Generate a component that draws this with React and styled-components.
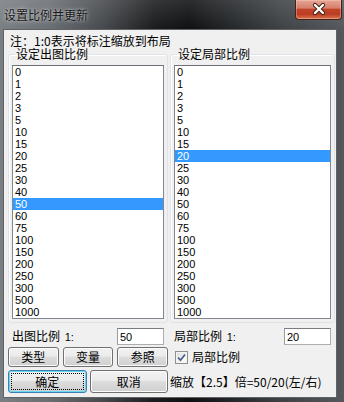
import styled, { createGlobalStyle } from "styled-components";

const GlobalStyle = createGlobalStyle`
  html, body {
    margin: 0;
    padding: 0;
    background: #1c1d1f;
  }
`;

const ratios = [0, 1, 2, 3, 5, 10, 15, 20, 25, 30, 40, 50, 60, 75, 100, 150, 200, 250, 300, 500, 1000];

const App = () => {
  return (
    <>
      <GlobalStyle />
      <Window>
        <TitleBar>
          <TitleText>设置比例并更新</TitleText>
          <CloseButton>
            <svg width="45" height="19" viewBox="0 0 45 19">
              <path d="M19 5 L27 13 M27 5 L19 13" stroke="#3a1b14" strokeWidth="4.2" strokeLinecap="round" />
              <path d="M19 5 L27 13 M27 5 L19 13" stroke="#ffffff" strokeWidth="2.4" strokeLinecap="round" />
            </svg>
          </CloseButton>
        </TitleBar>
        <Client>
          <Note>注：1:0表示将标注缩放到布局</Note>
          <Columns>
            <Column>
              <GroupBox>
                <GroupLegend>设定出图比例</GroupLegend>
                <ListBox>
                  {ratios.map((r) => (
                    <ListItem key={r} $selected={r === 50}>{r}</ListItem>
                  ))}
                </ListBox>
              </GroupBox>
              <FieldRow>
                <FieldLabel>出图比例 <Num>1:</Num></FieldLabel>
                <TextBox defaultValue="50" />
              </FieldRow>
              <ButtonGrid $cols={3} $height={20}>
                <Button>类型</Button>
                <Button>变量</Button>
                <Button>参照</Button>
              </ButtonGrid>
              <ButtonGrid $cols={2} $height={23}>
                <Button $focused>确定</Button>
                <Button>取消</Button>
              </ButtonGrid>
            </Column>
            <Column>
              <GroupBox>
                <GroupLegend>设定局部比例</GroupLegend>
                <ListBox>
                  {ratios.map((r) => (
                    <ListItem key={r} $selected={r === 20}>{r}</ListItem>
                  ))}
                </ListBox>
              </GroupBox>
              <FieldRow>
                <FieldLabel>局部比例 <Num>1:</Num></FieldLabel>
                <TextBox defaultValue="20" />
              </FieldRow>
              <CheckRow>
                <CheckBox>
                  <svg width="11" height="11" viewBox="0 0 11 11">
                    <path d="M2 5.5 L4.5 8.2 L9 2.5" stroke="#4a5f8f" strokeWidth="1.8" fill="none" />
                  </svg>
                </CheckBox>
                <span>局部比例</span>
              </CheckRow>
              <Status>缩放【2.5】倍=50/20(左/右)</Status>
            </Column>
          </Columns>
        </Client>
      </Window>
    </>
  );
};

const Window = styled.div`
  width: 344px;
  height: 402px;
  display: flex;
  flex-direction: column;
  box-sizing: border-box;
  padding: 0 7px 4px 3px;
  background:
    linear-gradient(180deg, rgba(255,255,255,0.12) 0%, rgba(255,255,255,0) 30px),
    linear-gradient(90deg, #7a7f84 0%, #6a6f74 14%, #45484c 30%, #1a1b1d 45%, #0f1011 55%, #25282b 68%, #3e4245 82%, #54585c 100%);
  font-family: "Noto Sans CJK SC", "Liberation Sans", sans-serif;
  font-size: 12px;
  color: #000;
`;

const TitleBar = styled.div`
  height: 29px;
  display: flex;
  align-items: flex-start;
  margin-right: -7px;
  margin-left: -3px;
  flex-shrink: 0;
`;

const TitleText = styled.div`
  padding: 8px 0 0 4px;
  font-size: 12px;
  line-height: 14px;
  color: #161616;
  text-shadow: 0 0 5px rgba(255, 255, 255, 0.55), 0 0 2px rgba(255, 255, 255, 0.5);
`;

const CloseButton = styled.div`
  margin-left: auto;
  margin-right: 2px;
  width: 47px;
  height: 20px;
  box-sizing: border-box;
  display: flex;
  align-items: center;
  justify-content: center;
  border: 1px solid #4a211a;
  border-top: none;
  border-radius: 0 0 4px 4px;
  background: linear-gradient(180deg, #e6a595 0%, #d6806c 42%, #c1432a 50%, #bb3d24 75%, #d9764f 100%);
  box-shadow: inset 0 0 0 1px rgba(255, 220, 200, 0.35);
`;

const Client = styled.div`
  flex: 1;
  box-sizing: border-box;
  background: #f0f0f0;
  border: 1px solid #5f6366;
  display: flex;
  flex-direction: column;
`;

const Note = styled.div`
  padding: 5px 0 0 6px;
  height: 13px;
  line-height: 12px;
  white-space: nowrap;
`;

const Columns = styled.div`
  display: flex;
  gap: 2px;
  padding: 0 1px 0 4px;
`;

const Column = styled.div`
  display: flex;
  flex-direction: column;
  flex: 1;
  &:first-child {
    flex: 0 0 160px;
  }
`;

const GroupBox = styled.fieldset`
  margin: 0;
  padding: 0 3px 3px 3px;
  min-width: 0;
  border: 1px solid #dde3e8;
  border-radius: 3px;
  box-shadow: inset 1px 1px 0 #ffffff;
`;

const GroupLegend = styled.legend`
  margin-left: 3px;
  padding: 0 1px;
  font-size: 12px;
  line-height: 12px;
  height: 12px;
`;

const ListBox = styled.div`
  margin-top: 5px;
  height: 254px;
  box-sizing: border-box;
  background: #fff;
  border: 1px solid #828790;
  border-top-color: #6d7077;
  overflow: hidden;
`;

const ListItem = styled.div`
  height: 12px;
  line-height: 12px;
  padding-left: 2px;
  font-family: "Liberation Sans", Arial, sans-serif;
  font-size: 11px;
  color: ${(p) => (p.$selected ? "#fff" : "#000")};
  background: ${(p) => (p.$selected ? "#3399ff" : "transparent")};
`;

const FieldRow = styled.div`
  margin-top: 5px;
  height: 17px;
  display: flex;
  align-items: center;
  justify-content: space-between;
  padding: 0 4px 0 4px;
`;

const FieldLabel = styled.span`
  line-height: 12px;
  white-space: nowrap;
`;

const Num = styled.span`
  margin-left: 2px;
  font-family: "Liberation Sans", Arial, sans-serif;
  font-size: 11px;
`;

const TextBox = styled.input`
  width: 47px;
  height: 17px;
  box-sizing: border-box;
  margin: 0;
  padding: 0 2px;
  border: 1px solid #abadb3;
  border-top-color: #7a7c80;
  border-left-color: #9a9ca2;
  background: #fff;
  font-family: "Liberation Sans", Arial, sans-serif;
  font-size: 11px;
  color: #000;
  outline: none;
`;

const ButtonGrid = styled.div`
  display: grid;
  grid-template-columns: repeat(${(p) => p.$cols}, 1fr);
  gap: ${(p) => (p.$cols === 3 ? 4 : 3)}px;
  height: ${(p) => p.$height}px;
  margin-top: ${(p) => (p.$cols === 3 ? 2 : 3)}px;
`;

const Button = styled.button`
  margin: 0;
  padding: 0;
  height: 100%;
  box-sizing: border-box;
  font-family: "Noto Sans CJK SC", "Liberation Sans", sans-serif;
  font-size: 12px;
  line-height: 12px;
  color: #000;
  border: 1px solid ${(p) => (p.$focused ? "#3c7fb1" : "#707070")};
  border-radius: 3px;
  background: linear-gradient(180deg, #f2f2f2 0%, #ebebeb 45%, #dddddd 50%, #cfcfcf 100%);
  box-shadow: inset 0 0 0 1px ${(p) => (p.$focused ? "#6ad6f0" : "#fbfbfb")};
  outline: ${(p) => (p.$focused ? "1px dotted #000" : "none")};
  outline-offset: -4px;
`;

const CheckRow = styled.div`
  margin-top: 2px;
  height: 20px;
  display: flex;
  align-items: center;
  gap: 4px;
  padding-left: 5px;
  line-height: 12px;
`;

const CheckBox = styled.span`
  width: 13px;
  height: 13px;
  box-sizing: border-box;
  border: 1px solid #8e8f8f;
  background: linear-gradient(135deg, #dcdcdc 0%, #f4f4f4 60%, #ffffff 100%);
  box-shadow: inset 0 0 0 1px #f4f4f4;
  display: flex;
  align-items: center;
  justify-content: center;
`;

const Status = styled.div`
  margin-top: 3px;
  height: 23px;
  display: flex;
  align-items: center;
  white-space: nowrap;
  line-height: 12px;
`;

export default App;
